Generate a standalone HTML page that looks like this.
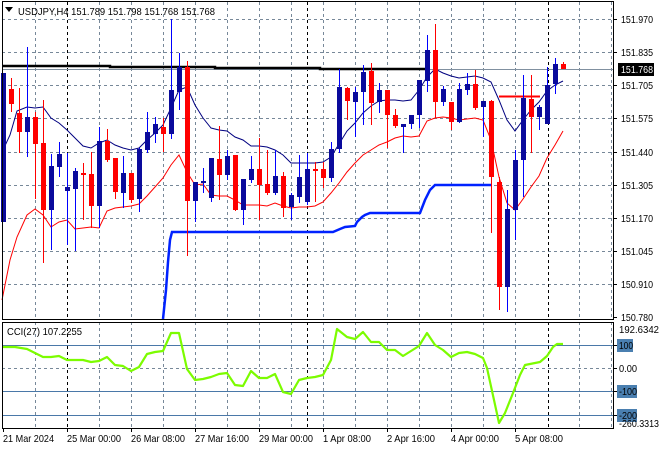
<!DOCTYPE html>
<html><head><meta charset="utf-8"><style>
html,body{margin:0;padding:0;background:#fff;}
svg{display:block;font-family:"Liberation Sans",sans-serif;}
</style></head><body>
<svg width="660" height="450" viewBox="0 0 660 450" xmlns="http://www.w3.org/2000/svg">
<rect width="660" height="450" fill="#fff"/>
<g stroke="#778899" stroke-width="1" stroke-dasharray="3,3" fill="none">
<path d="M2 19.5H613M2 52.5H613M2 85.5H613M2 118.5H613M2 152.5H613M2 185.5H613M2 218.5H613M2 251.5H613M2 284.5H613"/>
<path d="M35.5 2V319M99.5 2V319M131.5 2V319M163.5 2V319M195.5 2V319M227.5 2V319M259.5 2V319M291.5 2V319M323.5 2V319M355.5 2V319M387.5 2V319M419.5 2V319M451.5 2V319M483.5 2V319M515.5 2V319M579.5 2V319M611.5 2V319"/>
<path d="M35.5 322V428M99.5 322V428M131.5 322V428M163.5 322V428M195.5 322V428M227.5 322V428M259.5 322V428M291.5 322V428M323.5 322V428M355.5 322V428M387.5 322V428M419.5 322V428M451.5 322V428M483.5 322V428M515.5 322V428M579.5 322V428M611.5 322V428M2 368.5H613"/>
</g>
<g stroke="#000" stroke-width="1" stroke-dasharray="3,3">
<path d="M67.5 2V319M307.5 2V319M548.5 2V319M67.5 322V428M307.5 322V428M548.5 322V428"/>
</g>
<g stroke="#4a78a8" stroke-width="1"><path d="M2 345.5H613M2 391.5H613M2 415.5H613"/></g>
<path d="M2 69.5H613" stroke="#8090a0" stroke-width="1"/>
<path d="M2 66H110V67H215V68H320V69H425" stroke="#000" stroke-width="2.5" fill="none"/>
<path d="M163 319L166 290L168 262L170 240L172 232H333L340 229L345 227L355 226L357 222L362 217L365 215L370 213H420L425 200L430 190L435 185H491" stroke="#0022ff" stroke-width="2.5" fill="none"/>
<path d="M499 96.5H540" stroke="#ff0000" stroke-width="2"/>
<polyline fill="none" stroke="#000080" stroke-width="1" points="3,150 10,135 17,111 27,107 35,108 43,107 51,118 59,123 67,130 75,138 83,146 91,148 99,143 107,140 115,145 123,148 131,150 139,148 147,140 155,133 163,125 171,108 179,90 187,87 195,105 203,118 211,128 219,130 227,131 235,137 243,140 251,146 259,146 267,147 275,150 283,155 291,163 299,163 307,163 315,163 323,162 331,157 339,144 347,131 355,123 363,113 371,106 379,101 387,100 395,100 403,101 411,100 419,90 427,77 435,69 443,73 451,76 459,78 467,77 475,76 483,78 491,82 499,100 507,120 515,131 523,120 531,110 539,102 547,91 555,85 563,81"/>
<polyline fill="none" stroke="#ff0000" stroke-width="1" points="2,300 5,285 10,260 17,237 27,215 35,209 43,215 51,227 59,222 67,220 75,229 83,228 91,227 99,228 107,211 115,208 123,207 131,206 139,204 147,196 155,187 163,178 171,165 179,155 187,172 195,185 203,184 211,195 219,196 227,196 235,200 243,205 251,205 259,205 267,206 275,203 283,206 291,208 299,207 307,207 315,206 323,202 331,193 339,183 347,172 355,163 363,155 371,150 379,145 387,142 395,138 403,136 411,137 419,136 427,121 435,118 443,117 451,118 459,120 467,119 475,118 483,120 491,140 499,177 507,203 515,210 523,199 531,187 539,176 547,158 555,145 563,131"/>
<g fill="#0000ff">
<rect x="3" y="73" width="1" height="149"/><rect x="27" y="47" width="1" height="110"/><rect x="51" y="154" width="1" height="96"/><rect x="59" y="142" width="1" height="35"/><rect x="67" y="153" width="1" height="92"/><rect x="75" y="168" width="1" height="83"/><rect x="99" y="127" width="1" height="101"/><rect x="123" y="156" width="1" height="52"/><rect x="139" y="148" width="1" height="64"/><rect x="147" y="112" width="1" height="41"/><rect x="155" y="117" width="1" height="26"/><rect x="171" y="19" width="1" height="120"/><rect x="179" y="53" width="1" height="57"/><rect x="195" y="182" width="1" height="40"/><rect x="203" y="168" width="1" height="25"/><rect x="211" y="158" width="1" height="44"/><rect x="227" y="150" width="1" height="30"/><rect x="243" y="179" width="1" height="46"/><rect x="251" y="156" width="1" height="27"/><rect x="275" y="150" width="1" height="45"/><rect x="291" y="193" width="1" height="27"/><rect x="299" y="155" width="1" height="48"/><rect x="307" y="153" width="1" height="52"/><rect x="331" y="142" width="1" height="40"/><rect x="339" y="69" width="1" height="84"/><rect x="355" y="87" width="1" height="50"/><rect x="363" y="65" width="1" height="60"/><rect x="379" y="83" width="1" height="30"/><rect x="403" y="124" width="1" height="29"/><rect x="411" y="115" width="1" height="14"/><rect x="419" y="80" width="1" height="48"/><rect x="427" y="35" width="1" height="57"/><rect x="443" y="86" width="1" height="20"/><rect x="459" y="83" width="1" height="40"/><rect x="467" y="73" width="1" height="22"/><rect x="483" y="101" width="1" height="36"/><rect x="507" y="190" width="1" height="122"/><rect x="515" y="150" width="1" height="90"/><rect x="523" y="75" width="1" height="122"/><rect x="539" y="105" width="1" height="25"/><rect x="547" y="67" width="1" height="57"/><rect x="555" y="58" width="1" height="36"/>
</g>
<g fill="#0a0a9c">
<rect x="1" y="73" width="5" height="149"/><rect x="25" y="117" width="5" height="15"/><rect x="49" y="166" width="5" height="44"/><rect x="57" y="154" width="5" height="13"/><rect x="65" y="187" width="5" height="4"/><rect x="73" y="171" width="5" height="18"/><rect x="97" y="141" width="5" height="65"/><rect x="121" y="173" width="5" height="20"/><rect x="137" y="149" width="5" height="50"/><rect x="145" y="132" width="5" height="18"/><rect x="153" y="124" width="5" height="10"/><rect x="169" y="90" width="5" height="44"/><rect x="177" y="67" width="5" height="25"/><rect x="193" y="182" width="5" height="19"/><rect x="201" y="181" width="5" height="2"/><rect x="209" y="158" width="5" height="40"/><rect x="225" y="156" width="5" height="19"/><rect x="241" y="179" width="5" height="31"/><rect x="249" y="169" width="5" height="11"/><rect x="273" y="176" width="5" height="17"/><rect x="289" y="195" width="5" height="12"/><rect x="297" y="177" width="5" height="20"/><rect x="305" y="169" width="5" height="33"/><rect x="329" y="149" width="5" height="29"/><rect x="337" y="87" width="5" height="62"/><rect x="353" y="92" width="5" height="10"/><rect x="361" y="72" width="5" height="20"/><rect x="377" y="90" width="5" height="12"/><rect x="401" y="124" width="5" height="3"/><rect x="409" y="115" width="5" height="9"/><rect x="417" y="80" width="5" height="35"/><rect x="425" y="50" width="5" height="31"/><rect x="441" y="89" width="5" height="13"/><rect x="457" y="89" width="5" height="33"/><rect x="465" y="84" width="5" height="6"/><rect x="481" y="101" width="5" height="6"/><rect x="505" y="209" width="5" height="78"/><rect x="513" y="160" width="5" height="50"/><rect x="521" y="98" width="5" height="62"/><rect x="537" y="107" width="5" height="10"/><rect x="545" y="85" width="5" height="39"/><rect x="553" y="64" width="5" height="20"/>
</g>
<g fill="#ff0000">
<rect x="11" y="78" width="1" height="34"/><rect x="19" y="88" width="1" height="65"/><rect x="35" y="112" width="1" height="87"/><rect x="43" y="100" width="1" height="163"/><rect x="83" y="163" width="1" height="57"/><rect x="91" y="152" width="1" height="76"/><rect x="107" y="129" width="1" height="33"/><rect x="115" y="158" width="1" height="41"/><rect x="131" y="173" width="1" height="30"/><rect x="163" y="118" width="1" height="34"/><rect x="187" y="61" width="1" height="195"/><rect x="219" y="126" width="1" height="74"/><rect x="235" y="155" width="1" height="56"/><rect x="259" y="138" width="1" height="82"/><rect x="267" y="150" width="1" height="45"/><rect x="283" y="172" width="1" height="45"/><rect x="315" y="162" width="1" height="40"/><rect x="323" y="162" width="1" height="26"/><rect x="347" y="87" width="1" height="33"/><rect x="371" y="63" width="1" height="62"/><rect x="387" y="90" width="1" height="58"/><rect x="395" y="109" width="1" height="19"/><rect x="435" y="24" width="1" height="94"/><rect x="451" y="102" width="1" height="28"/><rect x="475" y="70" width="1" height="40"/><rect x="491" y="100" width="1" height="133"/><rect x="499" y="177" width="1" height="133"/><rect x="531" y="75" width="1" height="78"/><rect x="563" y="62" width="1" height="7"/>
<rect x="9" y="89" width="5" height="15"/><rect x="17" y="113" width="5" height="19"/><rect x="33" y="117" width="5" height="27"/><rect x="41" y="143" width="5" height="67"/><rect x="81" y="173" width="5" height="2"/><rect x="89" y="174" width="5" height="32"/><rect x="105" y="141" width="5" height="19"/><rect x="113" y="158" width="5" height="34"/><rect x="129" y="173" width="5" height="27"/><rect x="161" y="127" width="5" height="7"/><rect x="185" y="67" width="5" height="134"/><rect x="217" y="159" width="5" height="16"/><rect x="233" y="155" width="5" height="55"/><rect x="257" y="169" width="5" height="16"/><rect x="265" y="184" width="5" height="9"/><rect x="281" y="176" width="5" height="32"/><rect x="313" y="169" width="5" height="2"/><rect x="321" y="169" width="5" height="9"/><rect x="345" y="88" width="5" height="13"/><rect x="369" y="71" width="5" height="32"/><rect x="385" y="90" width="5" height="25"/><rect x="393" y="115" width="5" height="11"/><rect x="433" y="50" width="5" height="52"/><rect x="449" y="102" width="5" height="20"/><rect x="473" y="84" width="5" height="24"/><rect x="489" y="101" width="5" height="76"/><rect x="497" y="182" width="5" height="105"/><rect x="529" y="99" width="5" height="18"/><rect x="561" y="64" width="5" height="5"/>
</g>
<polyline fill="none" stroke="#7cfc00" stroke-width="2.2" stroke-linejoin="round" points="3,347 15,347 27,349 35,353 43,357 51,357 59,356 67,360 75,360 83,360 91,362 99,361 107,357 115,365 123,366 131,371 139,367 147,354 155,352 163,351 171,333 179,333 187,369 195,380 203,379 211,377 219,374 227,373 235,385 243,386 251,371 259,378 267,378 275,374 283,392 291,394 299,380 307,378 315,377 323,375 331,360 337,329 347,337 355,339 363,332 371,342 379,342 387,350 395,350 403,356 411,351 419,346 427,333 435,345 443,350 451,357 459,353 467,352 475,354 483,358 487,368 494,400 499,423 505,413 513,393 520,375 525,365 535,363 540,362 547,356 553,347 557,344 563,344"/>
<g fill="none" stroke="#000" stroke-width="1">
<path d="M2.5 1.5H613.5V319.5H2.5Z"/>
<path d="M2.5 322.5H613.5V428.5H2.5Z"/>
</g>
<g stroke="#000" stroke-width="1">
<path d="M613 19.5h4M613 52.5h4M613 85.5h4M613 118.5h4M613 152.5h4M613 185.5h4M613 218.5h4M613 251.5h4M613 284.5h4M613 317.5h4M613 345.5h4M613 368.5h4M613 391.5h4M613 415.5h4"/>
<path d="M3.5 428v4M67.5 428v4M131.5 428v4M195.5 428v4M259.5 428v4M323.5 428v4M387.5 428v4M451.5 428v4M515.5 428v4"/>
</g>
<path d="M5 7h8l-4 5z" fill="#000"/>
<text x="18" y="15" font-size="10.5" fill="#000" textLength="197" lengthAdjust="spacingAndGlyphs">USDJPY,H4  151.789 151.798 151.768 151.768</text>
<text x="7" y="335" font-size="10.5" fill="#000" textLength="75" lengthAdjust="spacingAndGlyphs">CCI(27) 107.2255</text>
<g font-size="10.5" fill="#000">
<text x="621" y="23" textLength="32" lengthAdjust="spacingAndGlyphs">151.970</text>
<text x="621" y="56" textLength="32" lengthAdjust="spacingAndGlyphs">151.835</text>
<text x="621" y="89" textLength="32" lengthAdjust="spacingAndGlyphs">151.705</text>
<text x="621" y="122" textLength="32" lengthAdjust="spacingAndGlyphs">151.575</text>
<text x="621" y="156" textLength="32" lengthAdjust="spacingAndGlyphs">151.440</text>
<text x="621" y="189" textLength="32" lengthAdjust="spacingAndGlyphs">151.305</text>
<text x="621" y="222" textLength="32" lengthAdjust="spacingAndGlyphs">151.170</text>
<text x="621" y="255" textLength="32" lengthAdjust="spacingAndGlyphs">151.045</text>
<text x="621" y="288" textLength="32" lengthAdjust="spacingAndGlyphs">150.910</text>
<text x="621" y="321" textLength="32" lengthAdjust="spacingAndGlyphs">150.780</text>
</g>
<rect x="618" y="63" width="36" height="13" fill="#000"/>
<text x="621" y="73" font-size="10.5" fill="#fff" textLength="32" lengthAdjust="spacingAndGlyphs">151.768</text>
<rect x="617" y="339" width="16" height="13" fill="#4a7fb0"/>
<rect x="617" y="385" width="20" height="13" fill="#4a7fb0"/>
<rect x="617" y="409" width="20" height="13" fill="#4a7fb0"/>
<g font-size="10.5" fill="#000">
<text x="619" y="333" textLength="40" lengthAdjust="spacingAndGlyphs">192.6342</text>
<text x="619" y="349" textLength="14" lengthAdjust="spacingAndGlyphs">100</text>
<text x="619" y="372" textLength="18" lengthAdjust="spacingAndGlyphs">0.00</text>
<text x="619" y="395" textLength="18" lengthAdjust="spacingAndGlyphs">-100</text>
<text x="619" y="419" textLength="18" lengthAdjust="spacingAndGlyphs">-200</text>
<text x="619" y="427" textLength="40" lengthAdjust="spacingAndGlyphs">-260.3313</text>
</g>
<g font-size="10.5" fill="#000">
<text x="3" y="442" textLength="51" lengthAdjust="spacingAndGlyphs">21 Mar 2024</text>
<text x="67" y="442" textLength="54" lengthAdjust="spacingAndGlyphs">25 Mar 00:00</text>
<text x="131" y="442" textLength="54" lengthAdjust="spacingAndGlyphs">26 Mar 08:00</text>
<text x="195" y="442" textLength="54" lengthAdjust="spacingAndGlyphs">27 Mar 16:00</text>
<text x="259" y="442" textLength="54" lengthAdjust="spacingAndGlyphs">29 Mar 00:00</text>
<text x="323" y="442" textLength="48" lengthAdjust="spacingAndGlyphs">1 Apr 08:00</text>
<text x="387" y="442" textLength="48" lengthAdjust="spacingAndGlyphs">2 Apr 16:00</text>
<text x="451" y="442" textLength="48" lengthAdjust="spacingAndGlyphs">4 Apr 00:00</text>
<text x="515" y="442" textLength="48" lengthAdjust="spacingAndGlyphs">5 Apr 08:00</text>
</g>
</svg>
</body></html>
